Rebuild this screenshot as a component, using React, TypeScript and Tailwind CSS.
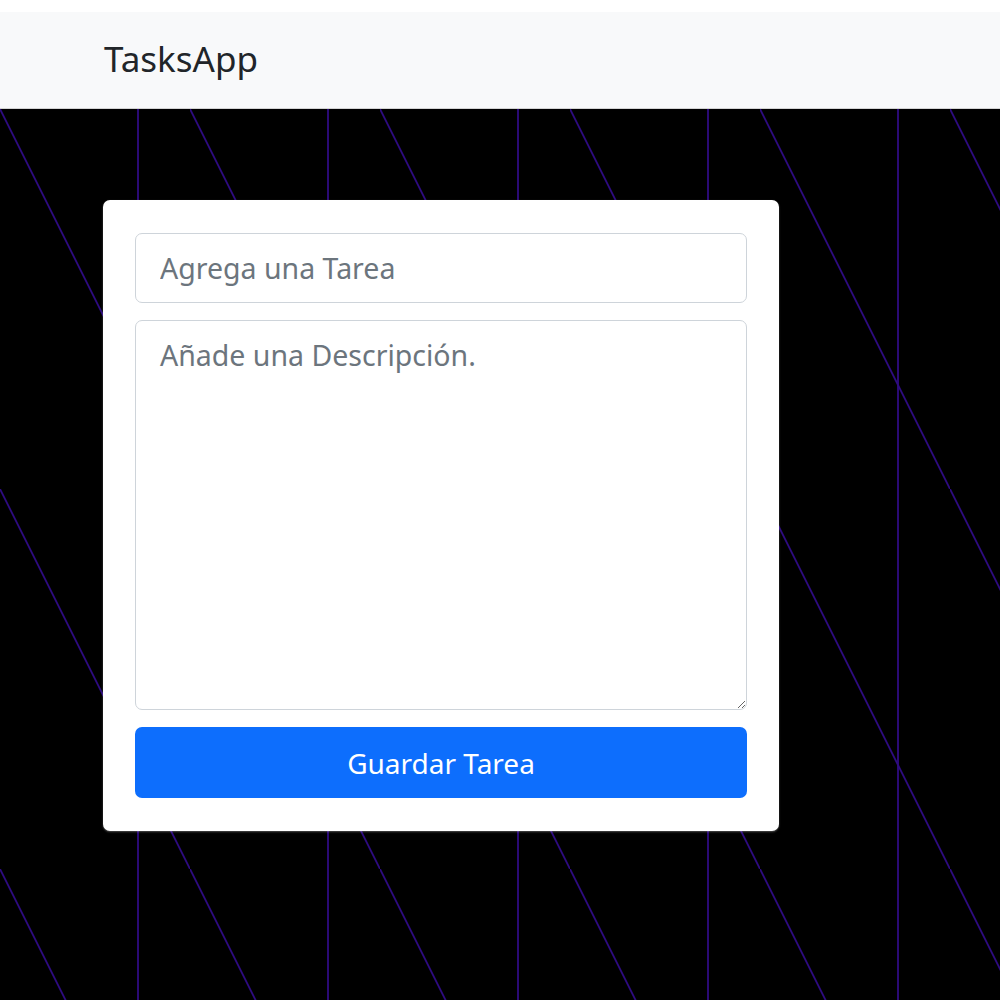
import React from "react";

// Tiled background: one vertical line and one diagonal per 190x380 tile
const LinesBackground: React.FC = () => (
  <svg className="absolute inset-0 h-full w-full" aria-hidden="true">
    <defs>
      <pattern id="lines" width="190" height="380" patternUnits="userSpaceOnUse">
        <line x1="138" y1="0" x2="138" y2="380" stroke="#2e0b82" strokeWidth="1.8" />
        <line x1="0" y1="0" x2="190" y2="380" stroke="#2e0b82" strokeWidth="1.8" />
      </pattern>
    </defs>
    <rect width="100%" height="100%" fill="url(#lines)" />
  </svg>
);

export default function App() {
  return (
    <div className="flex h-screen flex-col bg-white pt-[12px] font-['Noto_Sans',sans-serif]">
      {/* Navbar */}
      <nav className="flex h-[97px] shrink-0 items-center border-b border-[#d3d3d3] bg-[#f8f9fa] pb-[4px] pl-[104px]">
        <span className="text-[35px] leading-none text-[#212529]">TasksApp</span>
      </nav>

      {/* Main area */}
      <main className="relative flex-1 overflow-hidden bg-black">
        <LinesBackground />

        <form
          className="relative ml-[103px] mt-[91px] flex w-[676px] flex-col gap-[17px] rounded-[7px] bg-white px-[32px] pb-[33px] pt-[33px] shadow-[0_1px_2px_rgba(255,255,255,0.3)]"
          onSubmit={(e) => e.preventDefault()}
        >
          <input
            type="text"
            placeholder="Agrega una Tarea"
            className="h-[70px] w-full rounded-[7px] border border-[#ced4da] px-[24px] text-[28.5px] text-[#212529] outline-none placeholder:text-[#6c757d]"
          />
          <textarea
            placeholder="Añade una Descripción."
            className="h-[390px] w-full rounded-[7px] border border-[#ced4da] px-[24px] py-[13px] text-[28.5px] leading-[1.5] text-[#212529] outline-none placeholder:text-[#6c757d]"
          />
          <button
            type="submit"
            className="h-[71px] w-full rounded-[7px] bg-[#0d6efd] text-[28px] text-white"
          >
            Guardar Tarea
          </button>
        </form>
      </main>
    </div>
  );
}
